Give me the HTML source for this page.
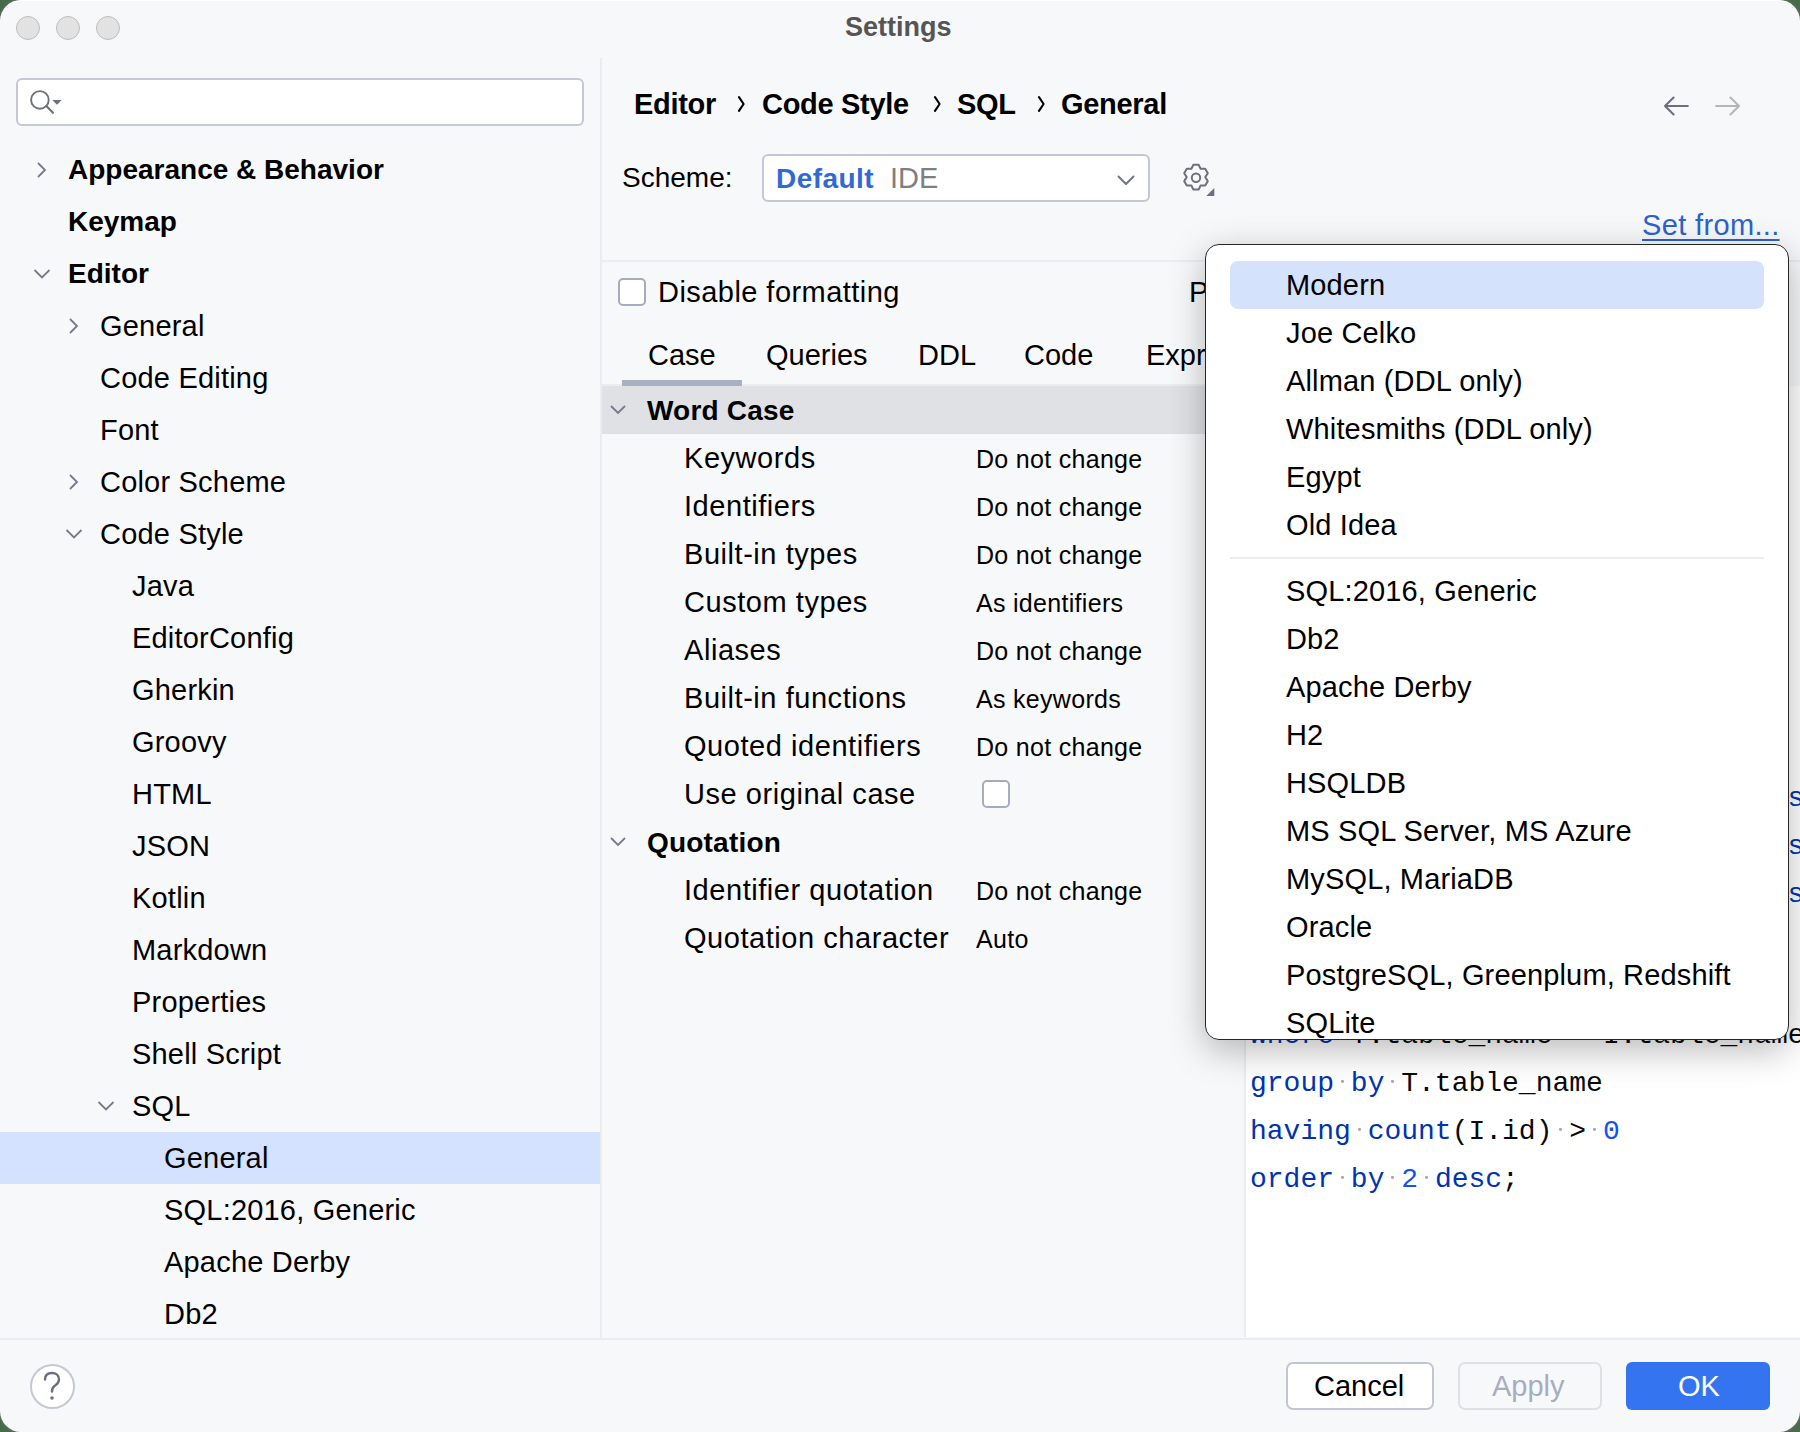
<!DOCTYPE html>
<html><head><meta charset="utf-8"><style>
html,body{margin:0;padding:0;}
body{width:1800px;height:1432px;background:#456d4a;overflow:hidden;position:relative;font-family:'Liberation Sans', sans-serif;}
#win{position:absolute;left:0;top:0;width:1800px;height:1432px;background:#f7f8fa;border-radius:21px;overflow:hidden;box-shadow:0 0 0 1.5px rgba(110,110,110,0.55);}
#hl{position:absolute;left:0;top:0;width:1800px;height:1432px;box-sizing:border-box;border-radius:21px;border-top:1px solid rgba(255,255,255,0.85);pointer-events:none;}
.t{position:absolute;white-space:pre;}
.r{position:absolute;}
</style></head><body><div id="win">
<div class="r" style="left:16px;top:16px;width:24px;height:24px;border-radius:50%;background:#e2e2e2;box-sizing:border-box;border:1px solid #bdbdbd;"></div>
<div class="r" style="left:56px;top:16px;width:24px;height:24px;border-radius:50%;background:#e2e2e2;box-sizing:border-box;border:1px solid #bdbdbd;"></div>
<div class="r" style="left:96px;top:16px;width:24px;height:24px;border-radius:50%;background:#e2e2e2;box-sizing:border-box;border:1px solid #bdbdbd;"></div>
<div class="t" style="left:845px;top:13.6px;font-size:27px;line-height:27px;font-weight:700;color:#555555;font-family:'Liberation Sans', sans-serif;letter-spacing:0px;">Settings</div>
<div class="r" style="left:600px;top:58px;width:2px;height:1280px;background:#ebecf0;"></div>
<div class="r" style="left:0px;top:1338px;width:1800px;height:2px;background:#ebecf0;"></div>
<div class="r" style="left:16px;top:78px;width:568px;height:48px;background:#fff;border:2px solid #c6c9d4;border-radius:6px;box-sizing:border-box;"></div>
<svg class="r" style="left:28px;top:86px" width="40" height="32" viewBox="0 0 40 32"><circle cx="11.9" cy="13.9" r="8.8" fill="none" stroke="#6c707e" stroke-width="1.9"/><path d="M18.3 20.1 L25 26.8" stroke="#6c707e" stroke-width="2.1" stroke-linecap="round"/><path d="M24.3 14 h9.4 l-4.7 4.7 z" fill="#6c707e"/></svg>
<div class="r" style="left:0px;top:1132px;width:600px;height:52px;background:#d4e2ff;"></div>
<div class="t" style="left:68px;top:156.3px;font-size:28px;line-height:28px;font-weight:700;color:#000;font-family:'Liberation Sans', sans-serif;letter-spacing:0px;">Appearance &amp; Behavior</div>
<svg class="r" style="left:35px;top:161px" width="14" height="18" viewBox="0 0 14 18"><path d="M3 2 L10 9 L3 16" fill="none" stroke="#767a8a" stroke-width="1.8"/></svg>
<div class="t" style="left:68px;top:208.3px;font-size:28px;line-height:28px;font-weight:700;color:#000;font-family:'Liberation Sans', sans-serif;letter-spacing:0px;">Keymap</div>
<div class="t" style="left:68px;top:260.3px;font-size:28px;line-height:28px;font-weight:700;color:#000;font-family:'Liberation Sans', sans-serif;letter-spacing:0px;">Editor</div>
<svg class="r" style="left:33px;top:267px" width="18" height="14" viewBox="0 0 18 14"><path d="M1.5 3 L9 10.5 L16.5 3" fill="none" stroke="#767a8a" stroke-width="1.8"/></svg>
<div class="t" style="left:100px;top:311.5px;font-size:29px;line-height:29px;font-weight:400;color:#000;font-family:'Liberation Sans', sans-serif;letter-spacing:0.2px;">General</div>
<svg class="r" style="left:67px;top:317px" width="14" height="18" viewBox="0 0 14 18"><path d="M3 2 L10 9 L3 16" fill="none" stroke="#767a8a" stroke-width="1.8"/></svg>
<div class="t" style="left:100px;top:363.5px;font-size:29px;line-height:29px;font-weight:400;color:#000;font-family:'Liberation Sans', sans-serif;letter-spacing:0.2px;">Code Editing</div>
<div class="t" style="left:100px;top:415.5px;font-size:29px;line-height:29px;font-weight:400;color:#000;font-family:'Liberation Sans', sans-serif;letter-spacing:0.2px;">Font</div>
<div class="t" style="left:100px;top:467.5px;font-size:29px;line-height:29px;font-weight:400;color:#000;font-family:'Liberation Sans', sans-serif;letter-spacing:0.2px;">Color Scheme</div>
<svg class="r" style="left:67px;top:473px" width="14" height="18" viewBox="0 0 14 18"><path d="M3 2 L10 9 L3 16" fill="none" stroke="#767a8a" stroke-width="1.8"/></svg>
<div class="t" style="left:100px;top:519.5px;font-size:29px;line-height:29px;font-weight:400;color:#000;font-family:'Liberation Sans', sans-serif;letter-spacing:0.2px;">Code Style</div>
<svg class="r" style="left:65px;top:527px" width="18" height="14" viewBox="0 0 18 14"><path d="M1.5 3 L9 10.5 L16.5 3" fill="none" stroke="#767a8a" stroke-width="1.8"/></svg>
<div class="t" style="left:132px;top:571.5px;font-size:29px;line-height:29px;font-weight:400;color:#000;font-family:'Liberation Sans', sans-serif;letter-spacing:0.2px;">Java</div>
<div class="t" style="left:132px;top:623.5px;font-size:29px;line-height:29px;font-weight:400;color:#000;font-family:'Liberation Sans', sans-serif;letter-spacing:0.2px;">EditorConfig</div>
<div class="t" style="left:132px;top:675.5px;font-size:29px;line-height:29px;font-weight:400;color:#000;font-family:'Liberation Sans', sans-serif;letter-spacing:0.2px;">Gherkin</div>
<div class="t" style="left:132px;top:727.5px;font-size:29px;line-height:29px;font-weight:400;color:#000;font-family:'Liberation Sans', sans-serif;letter-spacing:0.2px;">Groovy</div>
<div class="t" style="left:132px;top:779.5px;font-size:29px;line-height:29px;font-weight:400;color:#000;font-family:'Liberation Sans', sans-serif;letter-spacing:0.2px;">HTML</div>
<div class="t" style="left:132px;top:831.5px;font-size:29px;line-height:29px;font-weight:400;color:#000;font-family:'Liberation Sans', sans-serif;letter-spacing:0.2px;">JSON</div>
<div class="t" style="left:132px;top:883.5px;font-size:29px;line-height:29px;font-weight:400;color:#000;font-family:'Liberation Sans', sans-serif;letter-spacing:0.2px;">Kotlin</div>
<div class="t" style="left:132px;top:935.5px;font-size:29px;line-height:29px;font-weight:400;color:#000;font-family:'Liberation Sans', sans-serif;letter-spacing:0.2px;">Markdown</div>
<div class="t" style="left:132px;top:987.5px;font-size:29px;line-height:29px;font-weight:400;color:#000;font-family:'Liberation Sans', sans-serif;letter-spacing:0.2px;">Properties</div>
<div class="t" style="left:132px;top:1039.5px;font-size:29px;line-height:29px;font-weight:400;color:#000;font-family:'Liberation Sans', sans-serif;letter-spacing:0.2px;">Shell Script</div>
<div class="t" style="left:132px;top:1091.5px;font-size:29px;line-height:29px;font-weight:400;color:#000;font-family:'Liberation Sans', sans-serif;letter-spacing:0.2px;">SQL</div>
<svg class="r" style="left:97px;top:1099px" width="18" height="14" viewBox="0 0 18 14"><path d="M1.5 3 L9 10.5 L16.5 3" fill="none" stroke="#767a8a" stroke-width="1.8"/></svg>
<div class="t" style="left:164px;top:1143.5px;font-size:29px;line-height:29px;font-weight:400;color:#000;font-family:'Liberation Sans', sans-serif;letter-spacing:0.2px;">General</div>
<div class="t" style="left:164px;top:1195.5px;font-size:29px;line-height:29px;font-weight:400;color:#000;font-family:'Liberation Sans', sans-serif;letter-spacing:0.2px;">SQL:2016, Generic</div>
<div class="t" style="left:164px;top:1247.5px;font-size:29px;line-height:29px;font-weight:400;color:#000;font-family:'Liberation Sans', sans-serif;letter-spacing:0.2px;">Apache Derby</div>
<div class="t" style="left:164px;top:1299.5px;font-size:29px;line-height:29px;font-weight:400;color:#000;font-family:'Liberation Sans', sans-serif;letter-spacing:0.2px;">Db2</div>
<div class="t" style="left:634px;top:89.9px;font-size:29px;line-height:29px;font-weight:700;color:#000;font-family:'Liberation Sans', sans-serif;letter-spacing:-0.3px;">Editor</div>
<div class="t" style="left:762px;top:89.9px;font-size:29px;line-height:29px;font-weight:700;color:#000;font-family:'Liberation Sans', sans-serif;letter-spacing:-0.3px;">Code Style</div>
<div class="t" style="left:957px;top:89.9px;font-size:29px;line-height:29px;font-weight:700;color:#000;font-family:'Liberation Sans', sans-serif;letter-spacing:-0.3px;">SQL</div>
<div class="t" style="left:1061px;top:89.9px;font-size:29px;line-height:29px;font-weight:700;color:#000;font-family:'Liberation Sans', sans-serif;letter-spacing:-0.3px;">General</div>
<svg class="r" style="left:737px;top:96px" width="10" height="16" viewBox="0 0 10 16"><path d="M2 1.2 L6.6 8 L2 14.8" fill="none" stroke="#000" stroke-width="2.1" stroke-linecap="round" stroke-linejoin="round"/></svg>
<svg class="r" style="left:932.5px;top:96px" width="10" height="16" viewBox="0 0 10 16"><path d="M2 1.2 L6.6 8 L2 14.8" fill="none" stroke="#000" stroke-width="2.1" stroke-linecap="round" stroke-linejoin="round"/></svg>
<svg class="r" style="left:1036.5px;top:96px" width="10" height="16" viewBox="0 0 10 16"><path d="M2 1.2 L6.6 8 L2 14.8" fill="none" stroke="#000" stroke-width="2.1" stroke-linecap="round" stroke-linejoin="round"/></svg>
<svg class="r" style="left:1660px;top:94px" width="32" height="24" viewBox="0 0 32 24"><path d="M27.8 12 H5 M13.6 3.6 L5 12 L13.6 20.4" fill="none" stroke="#6c707e" stroke-width="2.1" stroke-linecap="round" stroke-linejoin="round"/></svg>
<svg class="r" style="left:1712px;top:94px" width="32" height="24" viewBox="0 0 32 24"><path d="M4.2 12 H27 M18.4 3.6 L27 12 L18.4 20.4" fill="none" stroke="#b6b6b8" stroke-width="2.1" stroke-linecap="round" stroke-linejoin="round"/></svg>
<div class="t" style="left:622px;top:164.1px;font-size:28px;line-height:28px;font-weight:400;color:#000;font-family:'Liberation Sans', sans-serif;letter-spacing:0px;">Scheme:</div>
<div class="r" style="left:762px;top:154px;width:388px;height:48px;background:#fff;border:2px solid #c4c7d3;border-radius:6px;box-sizing:border-box;"></div>
<div class="t" style="left:776px;top:164.9px;font-size:28px;line-height:28px;font-weight:700;color:#3069d4;font-family:'Liberation Sans', sans-serif;letter-spacing:0.45px;">Default</div>
<div class="t" style="left:890px;top:164.1px;font-size:29px;line-height:29px;font-weight:400;color:#7f7f7f;font-family:'Liberation Sans', sans-serif;letter-spacing:0px;">IDE</div>
<svg class="r" style="left:1114px;top:170px" width="24" height="20" viewBox="0 0 24 20"><path d="M4.5 6.5 L12 14 L19.5 6.5" fill="none" stroke="#6f7382" stroke-width="1.9" stroke-linecap="round" stroke-linejoin="round"/></svg>
<svg class="r" style="left:1178px;top:159px" width="40" height="40" viewBox="-18 -18 40 40"><path d="M-2.6,-12.2 L2.6,-12.2 L4.6,-8.2 L9.2,-8.3 L11.8,-3.8 L9.3,0 L11.8,4.2 L9.2,8.6 L4.6,8.5 L2.6,12.6 L-2.6,12.6 L-4.6,8.5 L-9.2,8.6 L-11.8,4.2 L-9.3,0 L-11.8,-3.8 L-9.2,-8.3 L-4.6,-8.2 Z" fill="none" stroke="#6c707e" stroke-width="2" stroke-linejoin="round"/><circle cx="0" cy="0.7" r="4.2" fill="none" stroke="#6c707e" stroke-width="2"/><path d="M18.3 10.9 V18.9 H10.3 Z" fill="#6c707e"/></svg>
<div class="t" style="left:1642px;top:211.2px;font-size:29px;line-height:29px;font-weight:400;color:#2d62cf;font-family:'Liberation Sans', sans-serif;letter-spacing:0.35px;text-decoration:underline;text-underline-offset:4px;text-decoration-thickness:2px;">Set from...</div>
<div class="r" style="left:602px;top:260px;width:1198px;height:2px;background:#ebecf0;"></div>
<div class="r" style="left:618px;top:278px;width:28px;height:28px;background:#fff;border:2px solid #a6abbd;border-radius:5px;box-sizing:border-box;"></div>
<div class="t" style="left:658px;top:277.5px;font-size:29px;line-height:29px;font-weight:400;color:#000;font-family:'Liberation Sans', sans-serif;letter-spacing:0.45px;">Disable formatting</div>
<div class="t" style="left:1189px;top:277.5px;font-size:29px;line-height:29px;font-weight:400;color:#000;font-family:'Liberation Sans', sans-serif;letter-spacing:0px;">P</div>
<div class="t" style="left:648px;top:341.2px;font-size:29px;line-height:29px;font-weight:400;color:#000;font-family:'Liberation Sans', sans-serif;letter-spacing:0px;">Case</div>
<div class="t" style="left:766px;top:341.2px;font-size:29px;line-height:29px;font-weight:400;color:#000;font-family:'Liberation Sans', sans-serif;letter-spacing:0px;">Queries</div>
<div class="t" style="left:918px;top:341.2px;font-size:29px;line-height:29px;font-weight:400;color:#000;font-family:'Liberation Sans', sans-serif;letter-spacing:0px;">DDL</div>
<div class="t" style="left:1024px;top:341.2px;font-size:29px;line-height:29px;font-weight:400;color:#000;font-family:'Liberation Sans', sans-serif;letter-spacing:0px;">Code</div>
<div class="t" style="left:1146px;top:341.2px;font-size:29px;line-height:29px;font-weight:400;color:#000;font-family:'Liberation Sans', sans-serif;letter-spacing:0px;">Expr</div>
<div class="r" style="left:602px;top:384px;width:643px;height:2px;background:#ebecf0;"></div>
<div class="r" style="left:622px;top:380px;width:120px;height:6px;background:#a9b0c2;"></div>
<div class="r" style="left:602px;top:386px;width:643px;height:48px;background:#dfe1e5;"></div>
<svg class="r" style="left:608px;top:402px" width="20" height="16" viewBox="0 0 20 16"><path d="M3 4 L10 11 L17 4" fill="none" stroke="#767a8a" stroke-width="1.8"/></svg>
<div class="t" style="left:647px;top:396.8px;font-size:28px;line-height:28px;font-weight:700;color:#000;font-family:'Liberation Sans', sans-serif;letter-spacing:0.2px;">Word Case</div>
<div class="t" style="left:684px;top:443.5px;font-size:29px;line-height:29px;font-weight:400;color:#000;font-family:'Liberation Sans', sans-serif;letter-spacing:0.55px;">Keywords</div>
<div class="t" style="left:976px;top:446.8px;font-size:25px;line-height:25px;font-weight:400;color:#000;font-family:'Liberation Sans', sans-serif;letter-spacing:0.3px;">Do not change</div>
<div class="t" style="left:684px;top:491.5px;font-size:29px;line-height:29px;font-weight:400;color:#000;font-family:'Liberation Sans', sans-serif;letter-spacing:0.55px;">Identifiers</div>
<div class="t" style="left:976px;top:494.8px;font-size:25px;line-height:25px;font-weight:400;color:#000;font-family:'Liberation Sans', sans-serif;letter-spacing:0.3px;">Do not change</div>
<div class="t" style="left:684px;top:539.5px;font-size:29px;line-height:29px;font-weight:400;color:#000;font-family:'Liberation Sans', sans-serif;letter-spacing:0.55px;">Built-in types</div>
<div class="t" style="left:976px;top:542.8px;font-size:25px;line-height:25px;font-weight:400;color:#000;font-family:'Liberation Sans', sans-serif;letter-spacing:0.3px;">Do not change</div>
<div class="t" style="left:684px;top:587.5px;font-size:29px;line-height:29px;font-weight:400;color:#000;font-family:'Liberation Sans', sans-serif;letter-spacing:0.55px;">Custom types</div>
<div class="t" style="left:976px;top:590.8px;font-size:25px;line-height:25px;font-weight:400;color:#000;font-family:'Liberation Sans', sans-serif;letter-spacing:0.3px;">As identifiers</div>
<div class="t" style="left:684px;top:635.5px;font-size:29px;line-height:29px;font-weight:400;color:#000;font-family:'Liberation Sans', sans-serif;letter-spacing:0.55px;">Aliases</div>
<div class="t" style="left:976px;top:638.8px;font-size:25px;line-height:25px;font-weight:400;color:#000;font-family:'Liberation Sans', sans-serif;letter-spacing:0.3px;">Do not change</div>
<div class="t" style="left:684px;top:683.5px;font-size:29px;line-height:29px;font-weight:400;color:#000;font-family:'Liberation Sans', sans-serif;letter-spacing:0.55px;">Built-in functions</div>
<div class="t" style="left:976px;top:686.8px;font-size:25px;line-height:25px;font-weight:400;color:#000;font-family:'Liberation Sans', sans-serif;letter-spacing:0.3px;">As keywords</div>
<div class="t" style="left:684px;top:731.5px;font-size:29px;line-height:29px;font-weight:400;color:#000;font-family:'Liberation Sans', sans-serif;letter-spacing:0.55px;">Quoted identifiers</div>
<div class="t" style="left:976px;top:734.8px;font-size:25px;line-height:25px;font-weight:400;color:#000;font-family:'Liberation Sans', sans-serif;letter-spacing:0.3px;">Do not change</div>
<div class="t" style="left:684px;top:779.5px;font-size:29px;line-height:29px;font-weight:400;color:#000;font-family:'Liberation Sans', sans-serif;letter-spacing:0.55px;">Use original case</div>
<div class="r" style="left:982px;top:780px;width:28px;height:28px;background:#fff;border:2px solid #a6abbd;border-radius:5px;box-sizing:border-box;"></div>
<svg class="r" style="left:608px;top:834px" width="20" height="16" viewBox="0 0 20 16"><path d="M3 4 L10 11 L17 4" fill="none" stroke="#767a8a" stroke-width="1.8"/></svg>
<div class="t" style="left:647px;top:829.3px;font-size:28px;line-height:28px;font-weight:700;color:#000;font-family:'Liberation Sans', sans-serif;letter-spacing:0.2px;">Quotation</div>
<div class="t" style="left:684px;top:875.5px;font-size:29px;line-height:29px;font-weight:400;color:#000;font-family:'Liberation Sans', sans-serif;letter-spacing:0.55px;">Identifier quotation</div>
<div class="t" style="left:976px;top:878.8px;font-size:25px;line-height:25px;font-weight:400;color:#000;font-family:'Liberation Sans', sans-serif;letter-spacing:0.3px;">Do not change</div>
<div class="t" style="left:684px;top:923.5px;font-size:29px;line-height:29px;font-weight:400;color:#000;font-family:'Liberation Sans', sans-serif;letter-spacing:0.55px;">Quotation character</div>
<div class="t" style="left:976px;top:926.8px;font-size:25px;line-height:25px;font-weight:400;color:#000;font-family:'Liberation Sans', sans-serif;letter-spacing:0.3px;">Auto</div>
<div class="r" style="left:1244px;top:386px;width:556px;height:951px;background:#fff;"></div>
<div class="r" style="left:1244px;top:386px;width:2px;height:951px;background:#ebecf0;"></div>
<div class="t" style="left:1250px;top:1022.2px;font-size:28px;line-height:28px;font-weight:400;color:#000;font-family:'Liberation Mono', monospace;letter-spacing:0px;white-space:pre;"><span style="color:#0033b3">where</span><span style="color:#080808"><span style="background:radial-gradient(circle at 50% 43%, #a9a9a9 0, #a9a9a9 1.1px, rgba(169,169,169,0) 1.9px)"> </span></span><span style="color:#080808">T.table_name</span><span style="color:#080808"><span style="background:radial-gradient(circle at 50% 43%, #a9a9a9 0, #a9a9a9 1.1px, rgba(169,169,169,0) 1.9px)"> </span></span><span style="color:#080808">=</span><span style="color:#080808"><span style="background:radial-gradient(circle at 50% 43%, #a9a9a9 0, #a9a9a9 1.1px, rgba(169,169,169,0) 1.9px)"> </span></span><span style="color:#080808">I.table_name</span></div>
<div class="t" style="left:1250px;top:1070.2px;font-size:28px;line-height:28px;font-weight:400;color:#000;font-family:'Liberation Mono', monospace;letter-spacing:0px;white-space:pre;"><span style="color:#0033b3">group</span><span style="color:#080808"><span style="background:radial-gradient(circle at 50% 43%, #a9a9a9 0, #a9a9a9 1.1px, rgba(169,169,169,0) 1.9px)"> </span></span><span style="color:#0033b3">by</span><span style="color:#080808"><span style="background:radial-gradient(circle at 50% 43%, #a9a9a9 0, #a9a9a9 1.1px, rgba(169,169,169,0) 1.9px)"> </span></span><span style="color:#080808">T.table_name</span></div>
<div class="t" style="left:1250px;top:1118.2px;font-size:28px;line-height:28px;font-weight:400;color:#000;font-family:'Liberation Mono', monospace;letter-spacing:0px;white-space:pre;"><span style="color:#0033b3">having</span><span style="color:#080808"><span style="background:radial-gradient(circle at 50% 43%, #a9a9a9 0, #a9a9a9 1.1px, rgba(169,169,169,0) 1.9px)"> </span></span><span style="color:#0033b3">count</span><span style="color:#080808">(I.id)</span><span style="color:#080808"><span style="background:radial-gradient(circle at 50% 43%, #a9a9a9 0, #a9a9a9 1.1px, rgba(169,169,169,0) 1.9px)"> </span></span><span style="color:#080808">&gt;</span><span style="color:#080808"><span style="background:radial-gradient(circle at 50% 43%, #a9a9a9 0, #a9a9a9 1.1px, rgba(169,169,169,0) 1.9px)"> </span></span><span style="color:#1750eb">0</span></div>
<div class="t" style="left:1250px;top:1166.2px;font-size:28px;line-height:28px;font-weight:400;color:#000;font-family:'Liberation Mono', monospace;letter-spacing:0px;white-space:pre;"><span style="color:#0033b3">order</span><span style="color:#080808"><span style="background:radial-gradient(circle at 50% 43%, #a9a9a9 0, #a9a9a9 1.1px, rgba(169,169,169,0) 1.9px)"> </span></span><span style="color:#0033b3">by</span><span style="color:#080808"><span style="background:radial-gradient(circle at 50% 43%, #a9a9a9 0, #a9a9a9 1.1px, rgba(169,169,169,0) 1.9px)"> </span></span><span style="color:#1750eb">2</span><span style="color:#080808"><span style="background:radial-gradient(circle at 50% 43%, #a9a9a9 0, #a9a9a9 1.1px, rgba(169,169,169,0) 1.9px)"> </span></span><span style="color:#0033b3">desc</span><span style="color:#080808">;</span></div>
<div class="t" style="left:1787.5px;top:784.5px;font-size:28px;line-height:28px;font-weight:400;color:#0033b3;font-family:'Liberation Mono', monospace;letter-spacing:0px;">s</div>
<div class="t" style="left:1787.5px;top:832.5px;font-size:28px;line-height:28px;font-weight:400;color:#0033b3;font-family:'Liberation Mono', monospace;letter-spacing:0px;">s</div>
<div class="t" style="left:1787.5px;top:880.5px;font-size:28px;line-height:28px;font-weight:400;color:#0033b3;font-family:'Liberation Mono', monospace;letter-spacing:0px;">s</div>
<div class="r" style="left:1205px;top:244px;width:584px;height:796px;border-radius:14px;box-shadow:0 10px 36px rgba(0,0,0,0.28);"></div>
<div class="r" style="left:1205px;top:244px;width:584px;height:796px;background:#fff;border:1.5px solid #262626;border-radius:14px;box-sizing:border-box;overflow:hidden;"></div>
<div class="r" style="left:1230px;top:261px;width:534px;height:48px;background:#d5e2fc;border-radius:8px;"></div>
<div class="t" style="left:1286px;top:270.5px;font-size:29px;line-height:29px;font-weight:400;color:#000;font-family:'Liberation Sans', sans-serif;letter-spacing:0.15px;">Modern</div>
<div class="t" style="left:1286px;top:318.5px;font-size:29px;line-height:29px;font-weight:400;color:#000;font-family:'Liberation Sans', sans-serif;letter-spacing:0.15px;">Joe Celko</div>
<div class="t" style="left:1286px;top:366.5px;font-size:29px;line-height:29px;font-weight:400;color:#000;font-family:'Liberation Sans', sans-serif;letter-spacing:0.15px;">Allman (DDL only)</div>
<div class="t" style="left:1286px;top:414.5px;font-size:29px;line-height:29px;font-weight:400;color:#000;font-family:'Liberation Sans', sans-serif;letter-spacing:0.15px;">Whitesmiths (DDL only)</div>
<div class="t" style="left:1286px;top:462.5px;font-size:29px;line-height:29px;font-weight:400;color:#000;font-family:'Liberation Sans', sans-serif;letter-spacing:0.15px;">Egypt</div>
<div class="t" style="left:1286px;top:510.5px;font-size:29px;line-height:29px;font-weight:400;color:#000;font-family:'Liberation Sans', sans-serif;letter-spacing:0.15px;">Old Idea</div>
<div class="r" style="left:1230px;top:557px;width:534px;height:2px;background:#ebecf0;"></div>
<div class="t" style="left:1286px;top:576.5px;font-size:29px;line-height:29px;font-weight:400;color:#000;font-family:'Liberation Sans', sans-serif;letter-spacing:0.15px;">SQL:2016, Generic</div>
<div class="t" style="left:1286px;top:624.5px;font-size:29px;line-height:29px;font-weight:400;color:#000;font-family:'Liberation Sans', sans-serif;letter-spacing:0.15px;">Db2</div>
<div class="t" style="left:1286px;top:672.5px;font-size:29px;line-height:29px;font-weight:400;color:#000;font-family:'Liberation Sans', sans-serif;letter-spacing:0.15px;">Apache Derby</div>
<div class="t" style="left:1286px;top:720.5px;font-size:29px;line-height:29px;font-weight:400;color:#000;font-family:'Liberation Sans', sans-serif;letter-spacing:0.15px;">H2</div>
<div class="t" style="left:1286px;top:768.5px;font-size:29px;line-height:29px;font-weight:400;color:#000;font-family:'Liberation Sans', sans-serif;letter-spacing:0.15px;">HSQLDB</div>
<div class="t" style="left:1286px;top:816.5px;font-size:29px;line-height:29px;font-weight:400;color:#000;font-family:'Liberation Sans', sans-serif;letter-spacing:0.15px;">MS SQL Server, MS Azure</div>
<div class="t" style="left:1286px;top:864.5px;font-size:29px;line-height:29px;font-weight:400;color:#000;font-family:'Liberation Sans', sans-serif;letter-spacing:0.15px;">MySQL, MariaDB</div>
<div class="t" style="left:1286px;top:912.5px;font-size:29px;line-height:29px;font-weight:400;color:#000;font-family:'Liberation Sans', sans-serif;letter-spacing:0.15px;">Oracle</div>
<div class="t" style="left:1286px;top:960.5px;font-size:29px;line-height:29px;font-weight:400;color:#000;font-family:'Liberation Sans', sans-serif;letter-spacing:0.15px;">PostgreSQL, Greenplum, Redshift</div>
<div class="t" style="left:1286px;top:1008.5px;font-size:29px;line-height:29px;font-weight:400;color:#000;font-family:'Liberation Sans', sans-serif;letter-spacing:0.15px;">SQLite</div>
<div class="r" style="left:29.5px;top:1363.5px;width:45px;height:45px;background:#fff;border:2px solid #c5c8d2;border-radius:50%;box-sizing:border-box;"></div>
<svg class="r" style="left:40px;top:1370px" width="24" height="34" viewBox="0 0 24 34"><path d="M5 9.5 C5 5 8 3 12 3 C16 3 19 5.5 19 9.5 C19 13 16.5 14.5 14.5 16 C12.8 17.3 12 18.5 12 21.5" fill="none" stroke="#6c707e" stroke-width="2.4" stroke-linecap="round"/><circle cx="12" cy="28" r="1.8" fill="#6c707e"/></svg>
<div class="r" style="left:1286px;top:1362px;width:148px;height:48px;background:#fff;border:2px solid #c2c6d1;border-radius:7px;box-sizing:border-box;"></div>
<div class="t" style="left:1314px;top:1371.7px;font-size:29px;line-height:29px;font-weight:400;color:#000;font-family:'Liberation Sans', sans-serif;letter-spacing:0px;">Cancel</div>
<div class="r" style="left:1458px;top:1362px;width:144px;height:48px;background:transparent;border:2px solid #dfe1e5;border-radius:7px;box-sizing:border-box;"></div>
<div class="t" style="left:1492px;top:1371.7px;font-size:29px;line-height:29px;font-weight:400;color:#a8adbd;font-family:'Liberation Sans', sans-serif;letter-spacing:0px;">Apply</div>
<div class="r" style="left:1626px;top:1362px;width:144px;height:48px;background:#3574f0;border-radius:6px;"></div>
<div class="t" style="left:1678px;top:1371.7px;font-size:29px;line-height:29px;font-weight:400;color:#fff;font-family:'Liberation Sans', sans-serif;letter-spacing:0px;">OK</div>
<div id="hl"></div></div></body></html>
